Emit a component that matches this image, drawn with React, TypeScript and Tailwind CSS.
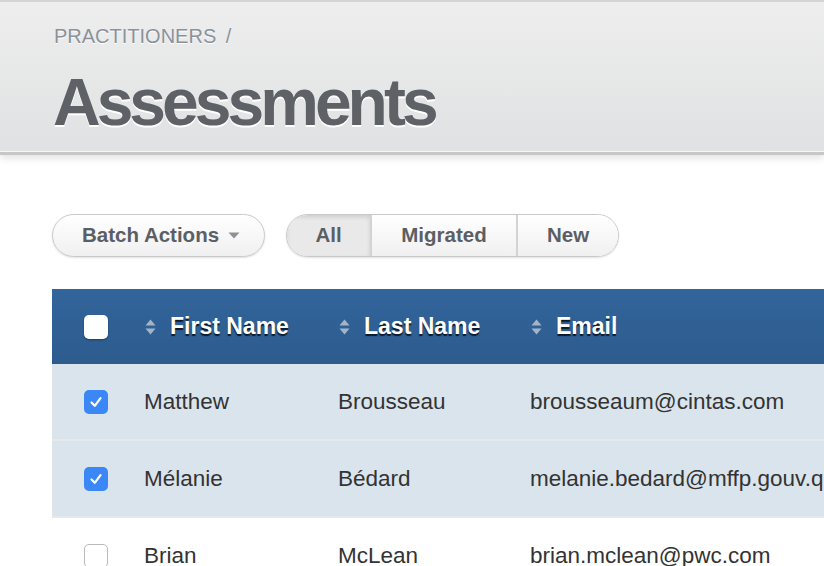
import { FC } from 'react';

type Person = {
  first: string;
  last: string;
  email: string;
  selected: boolean;
};

const people: Person[] = [
  { first: 'Matthew', last: 'Brousseau', email: 'brousseaum@cintas.com', selected: true },
  { first: 'Mélanie', last: 'Bédard', email: 'melanie.bedard@mffp.gouv.qc.ca', selected: true },
  { first: 'Brian', last: 'McLean', email: 'brian.mclean@pwc.com', selected: false },
];

// 並べ替えアイコン（上下の三角）
const SortIcon: FC = () => (
  <svg width="11" height="16" viewBox="0 0 11 16" className="shrink-0">
    <path d="M5.5 0.5 L10.5 6.5 L0.5 6.5 Z" fill="#a3b4c8" />
    <path d="M5.5 15.5 L10.5 9.5 L0.5 9.5 Z" fill="#a3b4c8" />
  </svg>
);

const Checkbox: FC<{ checked: boolean; header?: boolean }> = ({ checked, header }) => {
  if (checked) {
    return (
      <div className="w-[24px] h-[24px] rounded-[5px] bg-[#3c87f6] flex items-center justify-center">
        <svg width="16" height="16" viewBox="0 0 16 16">
          <path d="M3.5 8.5 L6.8 11.8 L12.5 4.2" fill="none" stroke="white" strokeWidth="2.2" strokeLinecap="round" strokeLinejoin="round" />
        </svg>
      </div>
    );
  }
  return (
    <div
      className={
        header
          ? 'w-[24px] h-[24px] rounded-[5px] bg-white shadow-[0_1px_2px_rgba(0,0,0,0.35)]'
          : 'w-[24px] h-[24px] rounded-[5px] bg-white border border-[#b9b9b9]'
      }
    />
  );
};

const HeaderCell: FC<{ label: string; className: string }> = ({ label, className }) => (
  <div className={`flex items-center gap-[14px] pl-[17px] ${className}`}>
    <SortIcon />
    <span className="text-white font-bold text-[23px] [text-shadow:0_2px_1px_rgba(0,0,0,0.75)]">{label}</span>
  </div>
);

export default function App() {
  return (
    <div className="w-full h-[566px] overflow-hidden bg-white font-['Liberation_Sans',Arial,sans-serif]">
      {/* ヘッダー */}
      <div className="border-t-2 border-t-[#d4d4d4] border-b-[3px] border-b-[#c7c7c7] bg-gradient-to-b from-[#eeeeee] to-[#e0e1e2] pt-[22px] pb-[17px] pl-[54px] shadow-[inset_0_-1px_0_#f5f5f5,0_3px_8px_rgba(0,0,0,0.12)]">
        <div className="h-[24px] leading-[24px] text-[20px] text-[#89929b] [text-shadow:0_1px_0_#ffffff]">
          PRACTITIONERS <span className="ml-[4px]">/</span>
        </div>
        <h1 className="mt-[21px] -ml-[1px] h-[66px] leading-[66px] text-[66px] font-bold tracking-[-4px] text-[#5e6267] [text-shadow:0_2px_0_#ffffff]">
          Assessments
        </h1>
      </div>

      {/* ボタン */}
      <div className="flex items-center gap-[21px] pl-[52px] mt-[59px]">
        <button className="h-[43px] w-[213px] rounded-full border-[1.5px] border-[#c9c9c9] bg-gradient-to-b from-white to-[#f0f0f0] shadow-[0_1px_2px_rgba(0,0,0,0.12)] flex items-center pl-[29px] gap-[9px] text-[20.5px] font-bold text-[#5b5f65]">
          Batch Actions
          <svg width="12" height="7" viewBox="0 0 12 7">
            <path d="M0.5 0.5 L11.5 0.5 L6 6.5 Z" fill="#8d9197" />
          </svg>
        </button>
        <div className="h-[43px] flex rounded-full border-[1.5px] border-[#c9c9c9] overflow-hidden shadow-[0_1px_2px_rgba(0,0,0,0.12)] text-[20.5px] font-bold text-[#5b5f65]">
          <div className="w-[83px] flex items-center justify-center bg-[#e9e9e9] shadow-[inset_0_2px_4px_rgba(0,0,0,0.12)]">All</div>
          <div className="w-[146px] flex items-center justify-center border-l-2 border-[#d3d3d3] bg-gradient-to-b from-white to-[#f0f0f0]">Migrated</div>
          <div className="w-[102px] flex items-center justify-center border-l-2 border-[#d3d3d3] bg-gradient-to-b from-white to-[#f0f0f0]">New</div>
        </div>
      </div>

      {/* テーブル */}
      <div className="ml-[52px] mt-[32px] w-[900px]">
        <div className="h-[75px] flex items-center bg-gradient-to-b from-[#32659b] to-[#2d5b8e]">
          <div className="w-[76px] pl-[32px] flex items-center">
            <Checkbox checked={false} header />
          </div>
          <HeaderCell label="First Name" className="w-[194px]" />
          <HeaderCell label="Last Name" className="w-[192px]" />
          <HeaderCell label="Email" className="flex-1" />
        </div>
        {people.map(p => (
          <div
            key={p.email}
            className={`h-[77px] flex items-center border-b-2 border-[#e6e8ea] text-[22.5px] text-[#333333] ${
              p.selected ? 'bg-[#dae4ed]' : 'bg-white'
            }`}
          >
            <div className="w-[76px] pl-[32px] flex items-center">
              <Checkbox checked={p.selected} />
            </div>
            <div className="w-[194px] pl-[16px]">{p.first}</div>
            <div className="w-[192px] pl-[16px]">{p.last}</div>
            <div className="flex-1 pl-[16px] whitespace-nowrap">{p.email}</div>
          </div>
        ))}
      </div>
    </div>
  );
}
